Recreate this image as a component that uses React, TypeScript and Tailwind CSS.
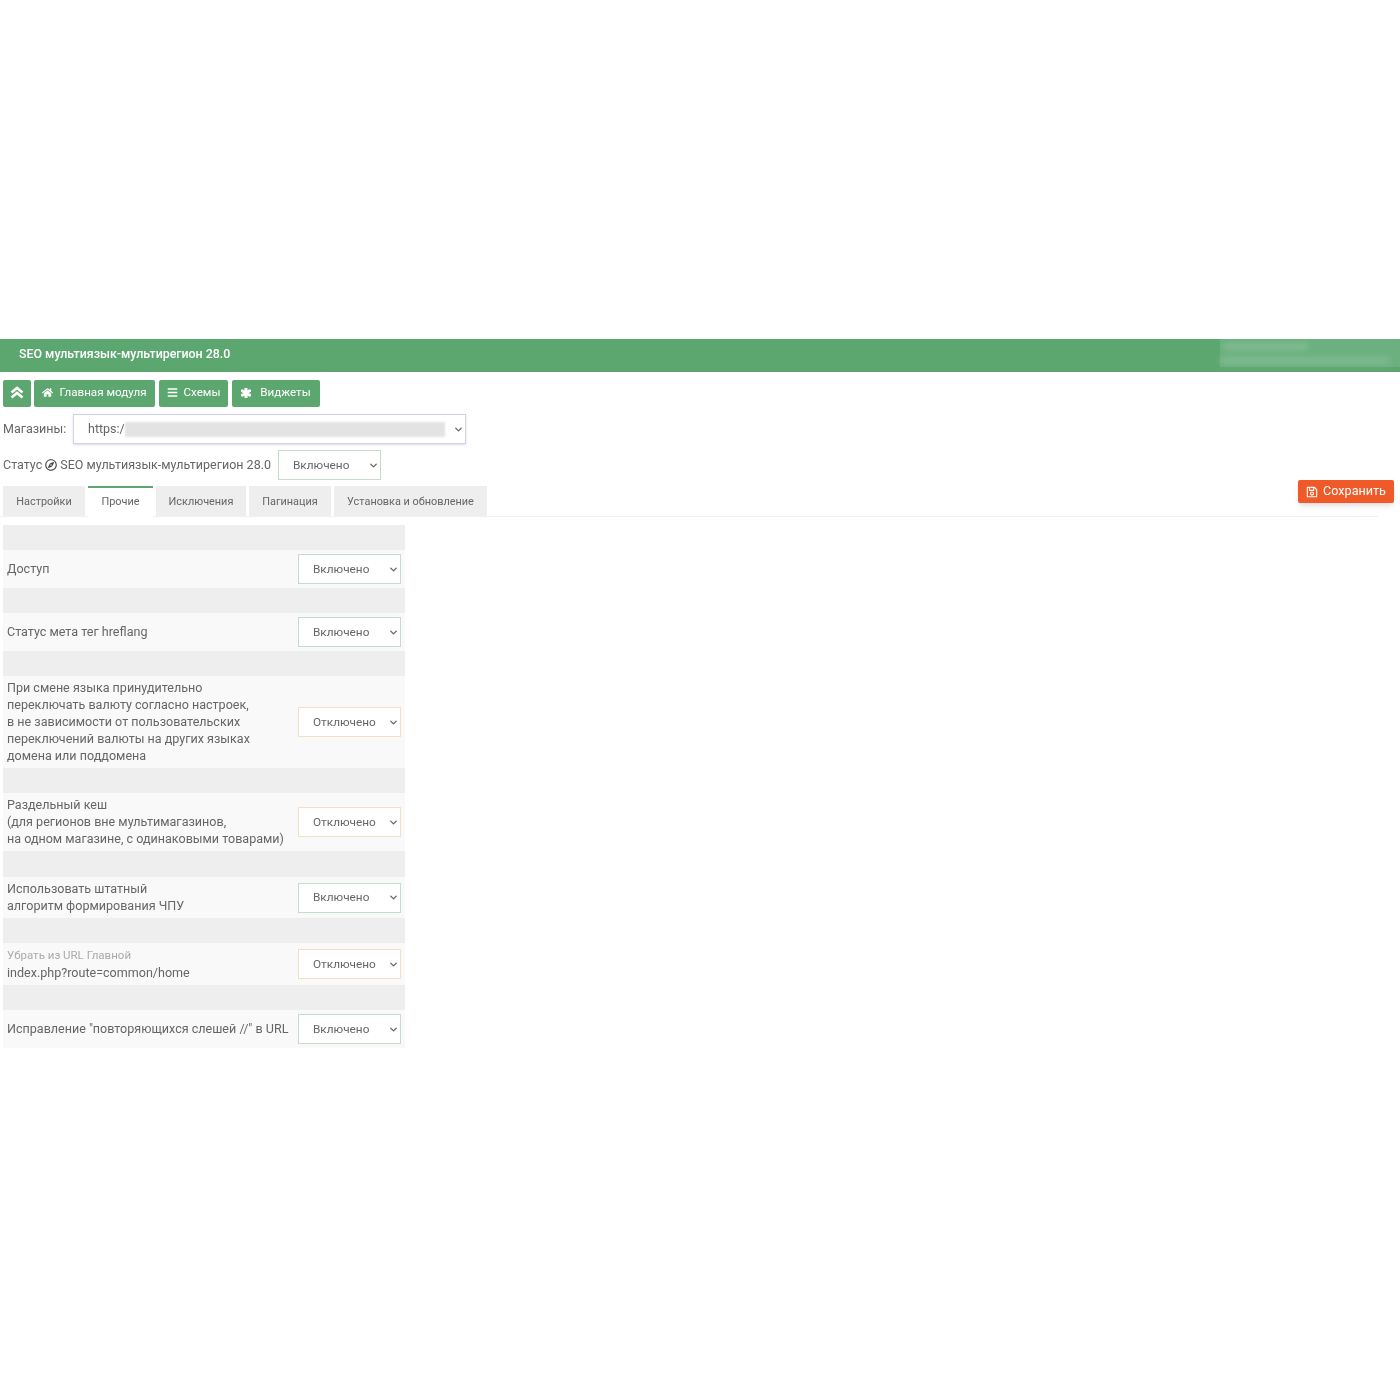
import { FaAsterisk, FaBars, FaHome, FaRegCompass, FaRegSave } from 'react-icons/fa';
import { LuChevronDown } from 'react-icons/lu';

const tabs = [
  { name: 'Настройки', width: 'w-[82px]' },
  { name: 'Прочие', width: 'w-[65px]' },
  { name: 'Исключения', width: 'w-[90px]' },
  { name: 'Пагинация', width: 'w-[82px]' },
  { name: 'Установка и обновление', width: 'w-[153px]' },
];

function Select({ on, className = '' }: { on: boolean; className?: string }) {
  return (
    <div className={`flex h-[30px] w-[103px] shrink-0 items-center justify-between bg-white pl-[14px] pr-[1px] text-[11.8px] text-[#666] border ${on ? 'border-[#c5dcc9]' : 'border-[#efe0c6]'} ${className}`}>
      <span>{on ? 'Включено' : 'Отключено'}</span>
      <LuChevronDown strokeWidth={3} className="h-[11px] w-[11px] text-[#666]" />
    </div>
  );
}

function Row({ on, height, band = 'h-[25px]', children }: { on: boolean; height: string; band?: string; children: React.ReactNode }) {
  return (
    <>
      <div className={`bg-[#eeeeee] ${band}`} />
      <div className={`flex items-center justify-between bg-[#f9f9f9] pl-[4px] pr-[4px] text-[12.55px] leading-[17px] text-[#666] ${height}`}>
        <div className="mb-px">{children}</div>
        <Select on={on} />
      </div>
    </>
  );
}

function NavButton({ children, className = '' }: { children: React.ReactNode; className?: string }) {
  return (
    <div className={`flex h-[27px] items-center justify-center rounded-[2px] bg-[#5ca76f] pb-[2px] text-[11.6px] text-white ${className}`}>
      {children}
    </div>
  );
}

export default function App() {
  return (
    <div className="relative min-h-[1400px] bg-white pt-[339px] font-['Roboto',sans-serif] blur-[0.4px]">
      <div className="flex h-[33px] items-start justify-between overflow-hidden bg-[#5ca76f] pl-[19px] text-[12.4px] font-medium text-white">
        <span className="mt-[6px]">SEO мультиязык-мультирегион 28.0</span>
        <div className="flex h-[28px] w-[180px] flex-col justify-center gap-[7px] bg-[#6bb07e]">
          <div className="ml-[4px] h-[7px] w-[84px] bg-[#83bc94] blur-[3px]" />
          <div className="h-[7px] w-[170px] bg-[#80bb92] blur-[3px]" />
        </div>
      </div>

      <div className="flex gap-[3px] pl-[3px] pt-[8px]">
        <NavButton className="w-[28px]">
          <svg viewBox="0 0 14 13" className="h-[13px] w-[14px]" fill="none" stroke="currentColor" strokeWidth="2.6">
            <path d="M1.5 6.5 7 2l5.5 4.5" />
            <path d="M1.5 11.5 7 7l5.5 4.5" />
          </svg>
        </NavButton>
        <NavButton className="w-[121px] gap-[6px]"><FaHome className="h-[11px] w-[11px]" />Главная модуля</NavButton>
        <NavButton className="ml-px w-[69px] gap-[6px]"><FaBars className="h-[11px] w-[11px]" />Схемы</NavButton>
        <NavButton className="ml-px w-[88px] gap-[9px]"><FaAsterisk stroke="currentColor" strokeWidth={70} className="h-[10px] w-[10px]" />Виджеты</NavButton>
      </div>

      <div className="mt-[7px] flex items-center pl-[3px] text-[12.5px] text-[#666]">
        <span className="w-[70px]">Магазины:</span>
        <div className="flex h-[30px] w-[393px] items-center justify-between border border-[#d5d0ea] pl-[14px] pr-[1px] text-[12.5px] shadow-sm">
          <div className="flex items-center">
            <span>https:/</span>
            <div className="h-[15px] w-[320px] bg-[#e3e3e3] blur-[1px]" />
          </div>
          <LuChevronDown strokeWidth={3} className="h-[11px] w-[11px] text-[#666]" />
        </div>
      </div>

      <div className="mt-[6px] flex items-center pl-[3px] text-[12.5px] text-[#666]">
        <span className="flex w-[275px] items-center gap-[3px]">
          Статус <FaRegCompass className="h-[12px] w-[12px] text-[#444]" /> SEO мультиязык-мультирегион 28.0
        </span>
        <Select on className="pt-px" />
      </div>

      <div className="mt-[6px] mr-[22px] flex h-[31px] gap-[3px] border-b border-[#f0f0f0] pl-[3px] text-[10.9px] text-[#666]">
        {tabs.map((tab, i) => (
          <div
            key={tab.name}
            className={
              i === 1
                ? `flex h-[31px] items-center justify-center border-t-[2px] border-[#5ca76f] bg-white ${tab.width}`
                : `flex h-[30px] items-center justify-center bg-[#eeeeee] pt-[2px] ${tab.width}`
            }
          >
            {tab.name}
          </div>
        ))}
      </div>

      <div className="ml-[3px] mt-[8px] w-[402px]">
        <Row on height="h-[38px]">Доступ</Row>
        <Row on height="h-[38px]">Статус мета тег hreflang</Row>
        <Row on={false} height="h-[92px]">
          При смене языка принудительно
          <br />
          переключать валюту согласно настроек,
          <br />
          в не зависимости от пользовательских
          <br />
          переключений валюты на других языках
          <br />
          домена или поддомена
        </Row>
        <Row on={false} height="h-[58px]">
          Раздельный кеш
          <br />
          (для регионов вне мультимагазинов,
          <br />
          на одном магазине, с одинаковыми товарами)
        </Row>
        <Row on height="h-[41px]" band="h-[26px]">
          Использовать штатный
          <br />
          алгоритм формирования ЧПУ
        </Row>
        <Row on={false} height="h-[42px]">
          <span className="text-[11.5px] text-[#aaa]">Убрать из URL Главной</span>
          <br />
          index.php?route=common/home
        </Row>
        <Row on height="h-[38px]">Исправление "повторяющихся слешей //" в URL</Row>
      </div>

      <div className="absolute left-[1298px] top-[480px] flex h-[23px] w-[96px] items-center justify-center gap-[5px] rounded-[2px] bg-[#f05a28] text-[12.6px] text-white shadow-md">
        <FaRegSave className="h-[12px] w-[12px]" />
        Сохранить
      </div>
    </div>
  );
}
